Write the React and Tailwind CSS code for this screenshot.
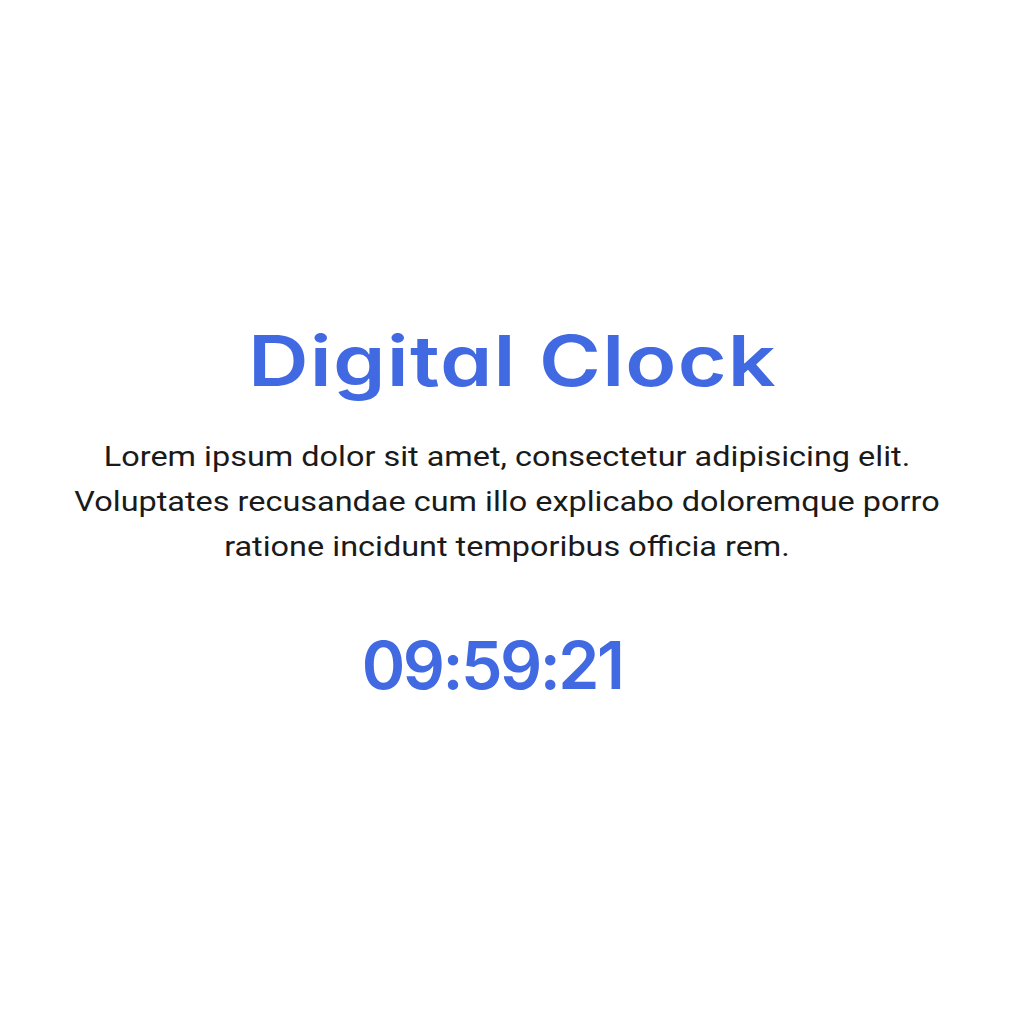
export default function App() {
  return (
    <div className="min-h-screen w-full bg-white flex flex-col items-center justify-center">
      <h1 className="font-[Inter,sans-serif] [font-feature-settings:'cv11'] text-[#4169e1] text-[70px] leading-none font-semibold tracking-[1px] scale-x-[1.2]">
        Digital Clock
      </h1>
      <p className="mt-[38px] pr-[8px] font-[Roboto,sans-serif] text-center text-[#1a1a1a] text-[28px] leading-[45px] scale-x-[1.158] whitespace-nowrap">
        Lorem ipsum dolor sit amet, consectetur adipisicing elit.<br />
        Voluptates recusandae cum illo explicabo doloremque porro<br />
        ratione incidunt temporibus officia rem.
      </p>
      <div className="mt-[63px] pr-[40px] font-[Inter,sans-serif] text-[#4169e1] text-[66px] leading-none font-semibold tracking-[-2.5px]">
        09:59:21
      </div>
    </div>
  );
}
